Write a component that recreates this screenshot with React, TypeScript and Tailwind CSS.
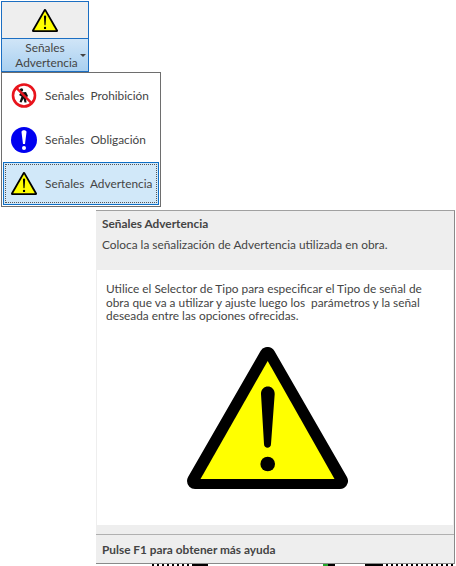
const WarningSign = ({ className }: { className: string }) => (
  <svg viewBox="0 0 161 142" className={className}>
    <path d="M80.5 8 L153 134 L8 134 Z" fill="#000" stroke="#000" strokeWidth="16" strokeLinejoin="round" />
    <path d="M80.7 14 L147.5 132 L13.5 132 Z" fill="#ffff00" />
    <path d="M74 47 C74 37 87.7 37 87.7 47 L84 97 C84 102 77 102 77 97 Z" fill="#000" />
    <circle cx="80.7" cy="117" r="7.3" fill="#000" />
  </svg>
);

const ProhibitionSign = () => (
  <svg viewBox="0 0 26 26" className="w-[26px] h-[26px] shrink-0">
    <circle cx="13" cy="12.5" r="11" fill="#fff" stroke="#e8141c" strokeWidth="2.6" />
    <circle cx="10.5" cy="7" r="1.7" fill="#111" />
    <path d="M10 9.5 L15 9 L17 13 L15 15 L15.5 19.5 L13.5 19.5 L12.5 15.5 L10.5 19.5 L8.5 19 L10.5 13.5 L8 12 Z" fill="#111" />
    <path d="M5.2 4.7 L20.8 20.3" stroke="#e8141c" strokeWidth="2.4" />
  </svg>
);

const ObligationSign = () => (
  <svg viewBox="0 0 26 26" className="w-[26px] h-[26px] shrink-0">
    <circle cx="13" cy="13" r="13" fill="#0000f0" />
    <path d="M10.5 5 C10.5 2.6 15.5 2.6 15.5 5 L14 17 L12 17 Z" fill="#fff" />
    <circle cx="13" cy="21" r="2" fill="#fff" />
  </svg>
);

const App = () => {
  return (
    <div className="w-[456px] h-[566px] bg-white overflow-hidden text-[11.85px] text-[#444] font-['Lato','Open_Sans',sans-serif]">
      {/* ribbon button */}
      <div className="ml-[1px] mt-[1px] w-[88px] h-[71px] border border-[#1b6ec2] flex flex-col">
        <div className="h-[37px] bg-[#eeeeee] border-b border-[#1b6ec2] flex items-center justify-center">
          <WarningSign className="w-[26px] h-[23px] shrink-0" />
        </div>
        <div className="relative flex-1 bg-gradient-to-b from-[#d0e5f7] to-[#a9d0f0] text-center leading-[15px] pt-[1px]">
          <div>Señales</div>
          <div className="pl-[3px]">Advertencia</div>
          <div className="absolute right-[2px] top-[15px] w-0 h-0 border-l-[3px] border-r-[3px] border-t-[3px] border-l-transparent border-r-transparent border-t-[#444]" />
        </div>
      </div>

      {/* dropdown menu */}
      <div className="ml-[1px] w-[160px] h-[135px] border border-[#6e6e6e] bg-white p-[1px] flex flex-col">
        <div className="h-[44px] flex items-center gap-[8px] pl-[8px] whitespace-pre">
          <ProhibitionSign />
          <span>Señales  Prohibición</span>
        </div>
        <div className="h-[44px] flex items-center gap-[8px] pl-[8px] whitespace-pre">
          <ObligationSign />
          <span>Señales  Obligación</span>
        </div>
        <div className="h-[43px] border border-[#0f6fc6] bg-[#d1e8f9] p-[1px]">
          <div className="h-full border border-dotted border-[#555] flex items-center gap-[8px] pl-[5px] whitespace-pre">
            <WarningSign className="w-[26px] h-[23px] shrink-0" />
            <span>Señales  Advertencia</span>
          </div>
        </div>
      </div>

      {/* tooltip */}
      <div className="ml-[96px] mt-[3px] w-[359px] h-[354px] border-r border-b border-t border-[#8a8a8a] border-t-[#a0a0a0] flex flex-col bg-[#eeeeee]">
        <div className="h-[59px] pl-[6px] pt-[5px]">
          <div className="font-bold leading-[16px]">Señales Advertencia</div>
          <div className="leading-[16px] mt-[5px]">Coloca la señalización de Advertencia utilizada en obra.</div>
        </div>
        <div className="flex-1 bg-white ml-[1px] mr-[1px] pl-[9px] pt-[12px] flex flex-col whitespace-pre">
          <div className="leading-[13.5px]">Utilice el Selector de Tipo para especificar el Tipo de señal de</div>
          <div className="leading-[13.5px]">obra que va a utilizar y ajuste luego los  parámetros y la señal</div>
          <div className="leading-[13.5px]">deseada entre las opciones ofrecidas.</div>
          <div className="mt-[24.5px] ml-[81px]">
            <WarningSign className="w-[161px] h-[142px]" />
          </div>
        </div>
        <div className="h-[10px] border-b border-[#b0b0b0]" />
        <div className="h-[28px] pl-[6px] pt-[1px] flex items-center font-bold">Pulse F1 para obtener más ayuda</div>
      </div>

      {/* bits of the drawing showing below the tooltip */}
      <div className="flex h-[2px] ml-[152px]">
        <div className="w-[42px] bg-[repeating-linear-gradient(90deg,#000_0_2px,transparent_2px_5px)]" />
        <div className="w-[14px] bg-black" />
        <div className="ml-[115px] w-[5px] bg-[#22a52a]" />
        <div className="w-[7px] bg-black" />
        <div className="ml-[30px] w-[16px] bg-black" />
        <div className="w-[75px] bg-[repeating-linear-gradient(90deg,#000_0_2px,transparent_2px_5px)]" />
      </div>
    </div>
  );
};

export default App;
